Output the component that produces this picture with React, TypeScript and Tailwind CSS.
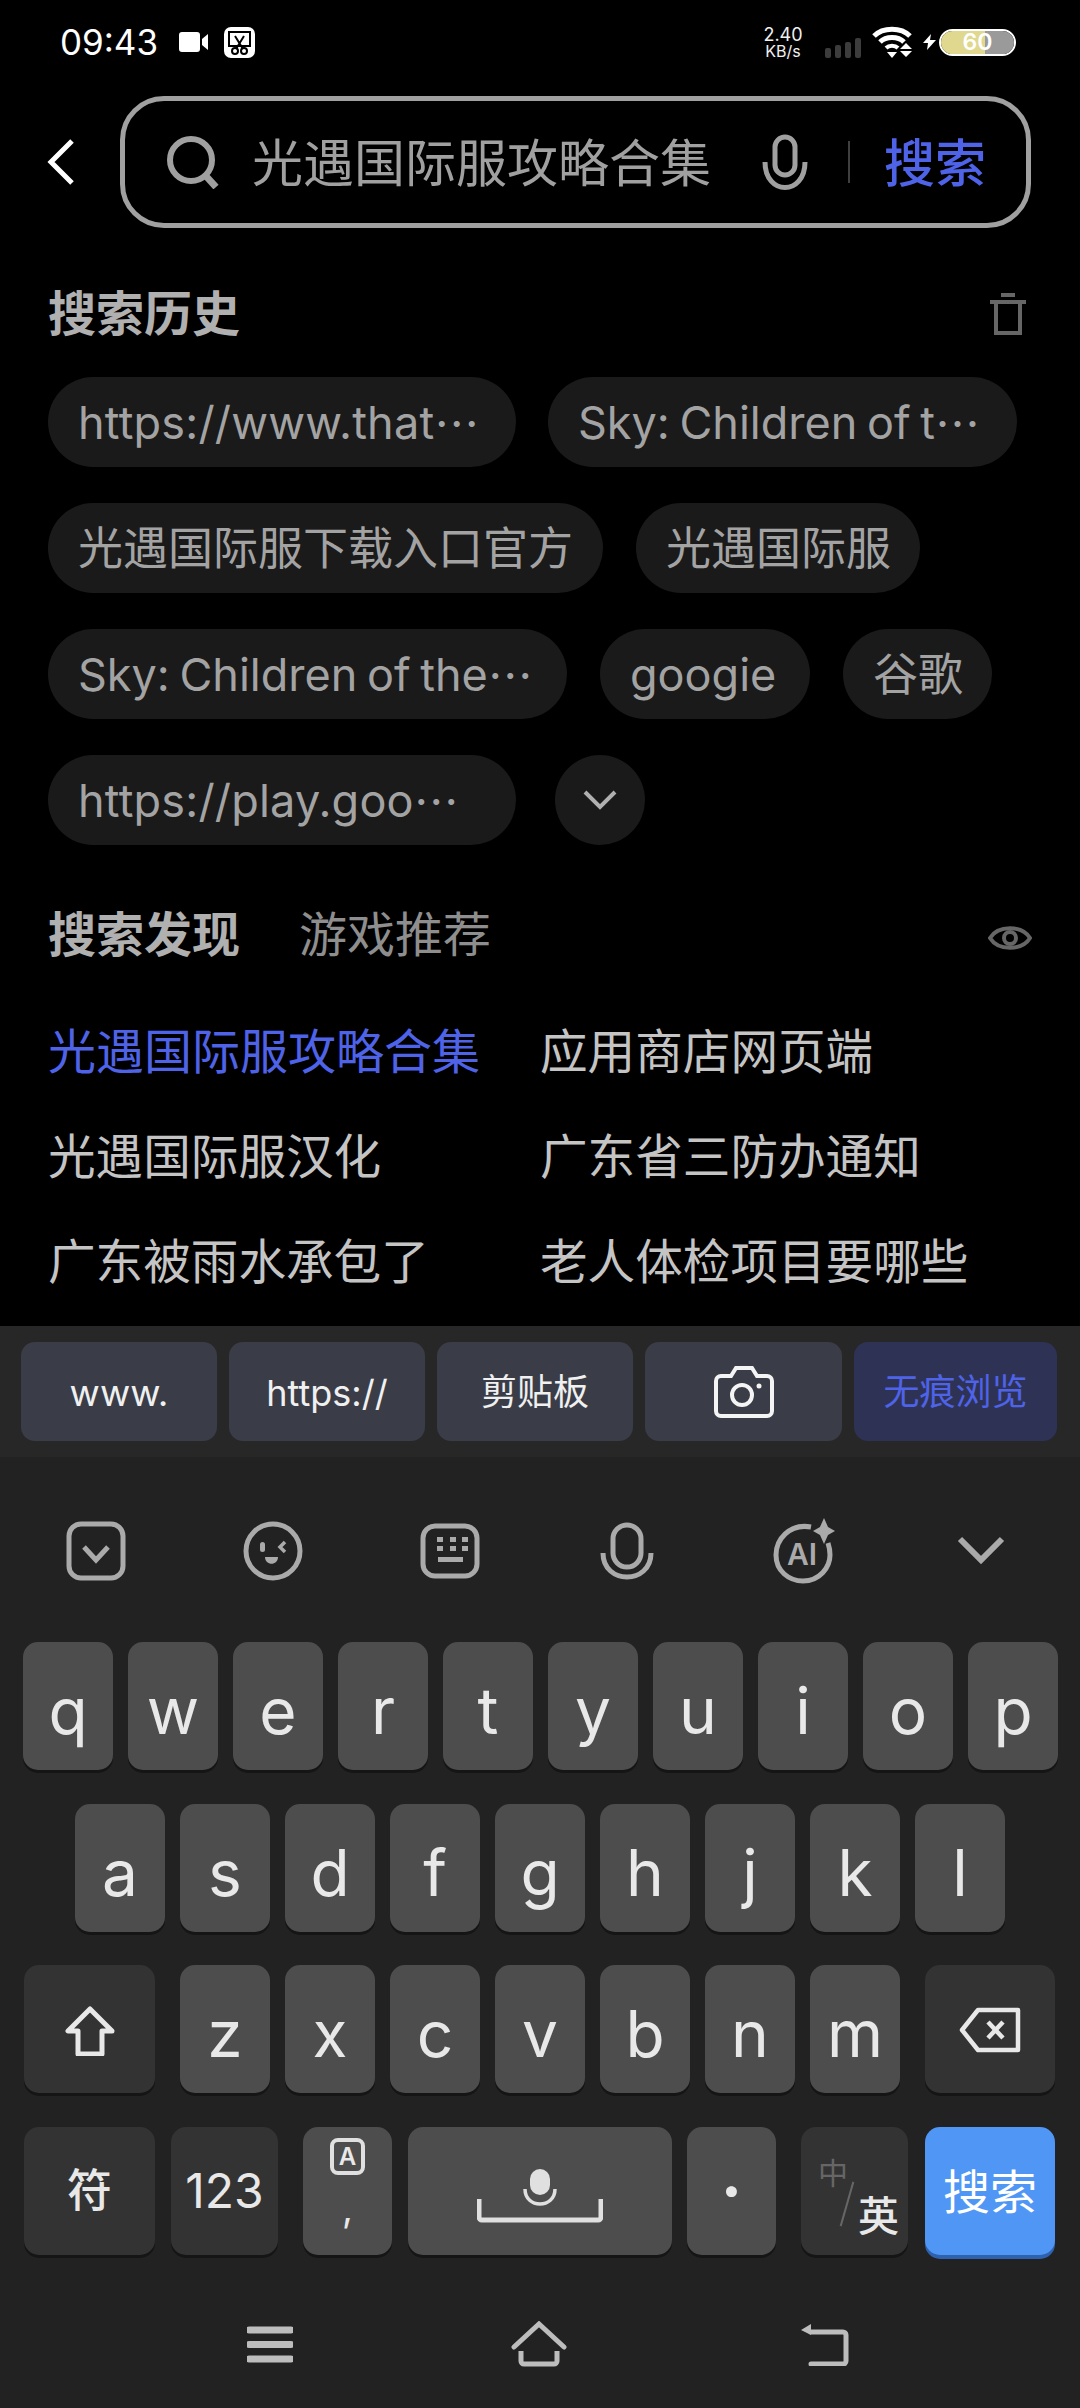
import React from "react";

function Chip({ w, text, more, url }: { w: string; text: string; more?: boolean; url?: boolean }) {
  return (
    <div className={`${w} h-[90px] shrink-0 rounded-[45px] bg-[#1a1a1a] pl-[30px] pt-[2px] flex items-center text-[45px] ${url ? "tracking-[0.2px]" : "tracking-normal"} [word-spacing:-3px] text-[#a3a3a3] whitespace-nowrap overflow-hidden`}>
      {text}
      {more && <span className="font-['Noto_Sans_CJK_SC',sans-serif]">⋯</span>}
    </div>
  );
}

function Tool({ w, blue, children }: { w: string; blue?: boolean; children: React.ReactNode }) {
  return (
    <div className={`${w} h-[99px] rounded-[14px] flex items-center justify-center text-[36px] ${blue ? "bg-[#2e3356] text-[#4f63e8]" : "bg-[#3a3d47] text-[#f0f0f0]"}`}>
      {children}
    </div>
  );
}

function Key({ label }: { label: string }) {
  return (
    <div className="w-[90px] h-[128px] shrink-0 rounded-[15px] bg-[#4d4d4d] shadow-[0_3px_0_#151515] pt-[9px] flex items-center justify-center text-[64px] text-[#e8e8e8]">
      {label}
    </div>
  );
}

function FnKey({ w, children }: { w: string; children: React.ReactNode }) {
  return (
    <div className={`${w} h-[128px] shrink-0 rounded-[15px] bg-[#333333] shadow-[0_3px_0_#151515] flex items-center justify-center text-[#e8e8e8]`}>
      {children}
    </div>
  );
}

function IconCell({ children }: { children: React.ReactNode }) {
  return <div className="w-[177px] flex items-center justify-center">{children}</div>;
}

export default function App() {
  return (
    <div className="w-[1080px] h-[2408px] bg-black flex flex-col overflow-hidden font-[Inter,'Noto_Sans_CJK_SC',sans-serif]">
      {/* Status bar */}
      <div className="h-[84px] shrink-0 pl-[60px] flex items-center text-white">
        <span className="text-[35px] w-[119px]">09:43</span>
        <svg width="30" height="22" viewBox="0 0 30 22">
          <rect x="0" y="1" width="21" height="20" rx="3" fill="#fff" />
          <path d="M23 8l6-5v16l-6-5z" fill="#fff" />
        </svg>
        <svg className="ml-[15px]" width="31" height="31" viewBox="0 0 31 31">
          <rect x="0" y="0" width="31" height="31" rx="7" fill="#fff" />
          <rect x="5" y="5" width="21" height="14" fill="none" stroke="#000" strokeWidth="2" />
          <circle cx="11" cy="24" r="3" fill="none" stroke="#000" strokeWidth="2" />
          <circle cx="20" cy="24" r="3" fill="none" stroke="#000" strokeWidth="2" />
          <path d="M11 9l8 13M20 9l-8 13" stroke="#000" strokeWidth="2" />
        </svg>
        <div className="ml-[507px] w-[42px] flex flex-col items-center text-[#f0f0f0]">
          <span className="text-[18px] leading-[18px]">2.40</span>
          <span className="text-[16px] leading-[15px]">KB/s</span>
        </div>
        <svg className="ml-[21px] mt-[12px]" width="36" height="20" viewBox="0 0 36 20">
          <rect x="0" y="10" width="6" height="10" rx="2" fill="#3c3c3c" />
          <rect x="10" y="7" width="6" height="13" rx="2" fill="#3c3c3c" />
          <rect x="20" y="4" width="6" height="16" rx="2" fill="#3c3c3c" />
          <rect x="30" y="0" width="6" height="20" rx="2" fill="#3c3c3c" />
        </svg>
        <svg className="ml-[11px]" width="42" height="32" viewBox="0 0 42 32">
          <path d="M2 10C11 1 29 1 38 10" fill="none" stroke="#fff" strokeWidth="5" />
          <path d="M8 16C14 10 26 10 32 16" fill="none" stroke="#fff" strokeWidth="5" />
          <path d="M14 22C17 19 23 19 26 22" fill="none" stroke="#fff" strokeWidth="4" />
          <path d="M15 26h10l-5 6z" fill="#fff" />
          <path d="M34 17l6 6H28zM28 25h12l-6 6z" fill="#fff" />
        </svg>
        <svg className="ml-[9px]" width="13" height="16" viewBox="0 0 13 16">
          <path d="M8 0L0 9h5l-1 7 9-10H7z" fill="#fff" />
        </svg>
        <div className="ml-[3px] w-[77px] h-[27px] rounded-[14px] border-2 border-white overflow-hidden relative flex">
          <div className="w-[44px] bg-[#e0d88e]" />
          <div className="flex-1 bg-[#9a9a9a]" />
          <span className="absolute inset-0 flex items-center justify-center text-[23px] leading-none font-semibold text-white">60</span>
        </div>
      </div>

      {/* Search bar */}
      <div className="mt-[12px] h-[132px] shrink-0 flex items-center pl-[47px]">
        <svg width="28" height="46" viewBox="0 0 28 46">
          <path d="M25 2L4 23l21 21" fill="none" stroke="#fff" strokeWidth="5" />
        </svg>
        <div className="ml-[45px] w-[911px] h-[132px] rounded-[44px] border-[5px] border-[#a0a0a0] flex items-center pl-[42px]">
          <svg width="54" height="54" viewBox="0 0 54 54">
            <circle cx="24" cy="25" r="21" fill="none" stroke="#a0a0a0" strokeWidth="6" />
            <path d="M38 40l11 12" stroke="#a0a0a0" strokeWidth="7" />
          </svg>
          <span className="ml-[31px] pt-[5px] w-[510px] text-[51px] text-[#a0a0a0] whitespace-nowrap">光遇国际服攻略合集</span>
          <svg width="46" height="56" viewBox="0 0 46 56">
            <rect x="13" y="3" width="20" height="38" rx="10" fill="none" stroke="#a0a0a0" strokeWidth="5" />
            <path d="M3 28c0 34 40 34 40 0" fill="none" stroke="#a0a0a0" strokeWidth="5" />
          </svg>
          <div className="ml-[40px] w-[2px] h-[42px] bg-[#3f3f3f]" />
          <span className="ml-[34px] pt-[5px] text-[51px] font-medium text-[#4f63e8]">搜索</span>
        </div>
      </div>

      {/* Search history */}
      <div className="mt-[56px] h-[60px] shrink-0 pl-[48px] pr-[54px] flex items-center justify-between">
        <span className="text-[48px] font-bold text-[#b0b0b0]">搜索历史</span>
        <svg width="36" height="42" viewBox="0 0 36 42">
          <path d="M0 9h36M11 2h14" stroke="#666" strokeWidth="4" />
          <path d="M6 10v30h24V10" fill="none" stroke="#666" strokeWidth="4" />
        </svg>
      </div>
      <div className="mt-[33px] pl-[48px] flex flex-col gap-[36px]">
        <div className="flex gap-[32px]">
          <Chip w="w-[468px]" text="https://www.that" more url />
          <Chip w="w-[469px]" text="Sky: Children of t" more />
        </div>
        <div className="flex gap-[33px]">
          <Chip w="w-[555px]" text="光遇国际服下载入口官方" />
          <Chip w="w-[284px]" text="光遇国际服" />
        </div>
        <div className="flex gap-[33px]">
          <Chip w="w-[519px]" text="Sky: Children of the" more />
          <Chip w="w-[210px]" text="googie" />
          <Chip w="w-[149px]" text="谷歌" />
        </div>
        <div className="flex gap-[39px]">
          <Chip w="w-[468px]" text="https://play.goo" more url />
          <div className="w-[90px] h-[90px] rounded-full bg-[#1a1a1a] flex items-center justify-center">
            <svg width="34" height="22" viewBox="0 0 34 22">
              <path d="M2 3l15 15L32 3" fill="none" stroke="#b0b0b0" strokeWidth="4" />
            </svg>
          </div>
        </div>
      </div>

      {/* Search discover */}
      <div className="mt-[60px] h-[60px] shrink-0 pl-[48px] pr-[48px] flex items-center">
        <span className="text-[48px] font-bold text-[#b0b0b0]">搜索发现</span>
        <span className="ml-[59px] text-[48px] text-[#8e8e8e]">游戏推荐</span>
        <svg className="ml-auto mt-[5px]" width="44" height="34" viewBox="0 0 44 34">
          <path d="M2 17C10 4 34 4 42 17 34 30 10 30 2 17z" fill="none" stroke="#666" strokeWidth="4" />
          <circle cx="22" cy="17" r="6" fill="none" stroke="#666" strokeWidth="4" />
        </svg>
      </div>
      <div className="mt-[34px] pl-[48px] grid grid-cols-[492px_1fr] auto-rows-[105px] items-center text-[47.6px] text-[#c4c4c4]">
        <span className="text-[48px] text-[#4f63e8]">光遇国际服攻略合集</span>
        <span>应用商店网页端</span>
        <span>光遇国际服汉化</span>
        <span>广东省三防办通知</span>
        <span>广东被雨水承包了</span>
        <span>老人体检项目要哪些</span>
      </div>

      {/* Keyboard */}
      <div className="mt-auto h-[1082px] shrink-0 bg-[#222222] flex flex-col">
        <div className="h-[131px] shrink-0 bg-[#272727] pt-[16px] pl-[21px] flex gap-[12px]">
          <Tool w="w-[196px]"><span className="pt-[3px] text-[37px]">www.</span></Tool>
          <Tool w="w-[196px]"><span className="pt-[2px]">https://</span></Tool>
          <Tool w="w-[196px]">剪贴板</Tool>
          <Tool w="w-[197px]">
            <svg width="62" height="52" viewBox="0 0 62 52">
              <path d="M3 15a5 5 0 0 1 5-5h10l5-8h16l5 8h10a5 5 0 0 1 5 5v30a5 5 0 0 1-5 5H8a5 5 0 0 1-5-5z" fill="none" stroke="#f4f4f4" strokeWidth="4" />
              <circle cx="29" cy="29" r="10" fill="none" stroke="#f4f4f4" strokeWidth="4" />
              <circle cx="46" cy="20" r="2.5" fill="#f4f4f4" />
            </svg>
          </Tool>
          <Tool w="w-[203px]" blue>无痕浏览</Tool>
        </div>

        {/* Toolbar icons */}
        <div className="h-[185px] shrink-0 pl-[7px] pt-[2px] flex items-center">
          <IconCell>
            <svg width="60" height="60" viewBox="0 0 60 60">
              <rect x="3" y="3" width="54" height="54" rx="12" fill="none" stroke="#aaaaaa" strokeWidth="5" />
              <path d="M18 26l12 13 12-13" fill="none" stroke="#aaaaaa" strokeWidth="5" />
            </svg>
          </IconCell>
          <IconCell>
            <svg width="60" height="60" viewBox="0 0 60 60">
              <circle cx="30" cy="30" r="27" fill="none" stroke="#aaaaaa" strokeWidth="5" />
              <rect x="17" y="21" width="5" height="10" rx="2.5" fill="#aaaaaa" />
              <path d="M42 21l-5 5 5 5" fill="none" stroke="#aaaaaa" strokeWidth="3.5" />
              <path d="M22 36h13c0 9-13 9-13 0z" fill="#aaaaaa" />
            </svg>
          </IconCell>
          <IconCell>
            <svg width="60" height="56" viewBox="0 0 60 56">
              <rect x="3" y="3" width="54" height="50" rx="12" fill="none" stroke="#aaaaaa" strokeWidth="5" />
              <path d="M17 14h6v5h-6zM30 14h6v5h-6zM42 14h6v5h-6zM17 23h6v5h-6zM30 23h6v5h-6zM42 23h6v5h-6zM18 34h25v5H18z" fill="#aaaaaa" />
            </svg>
          </IconCell>
          <IconCell>
            <svg width="54" height="58" viewBox="0 0 54 58">
              <rect x="13" y="3" width="28" height="42" rx="14" fill="none" stroke="#aaaaaa" strokeWidth="5" />
              <path d="M3 31c0 32 48 32 48 0" fill="none" stroke="#aaaaaa" strokeWidth="5" />
            </svg>
          </IconCell>
          <IconCell>
            <svg width="62" height="66" viewBox="0 0 62 66">
              <path d="M38 9C16 5 3 22 3 37c0 16 13 26 27 26 17 0 27-14 27-26 0-6-1-9-2-12" fill="none" stroke="#aaaaaa" strokeWidth="5" />
              <path d="M51 0l4 9 7 4-7 4-4 9-4-9-7-4 7-4z" fill="#aaaaaa" />
              <text x="29" y="47" textAnchor="middle" fontSize="30" fontWeight="600" fill="#aaaaaa">AI</text>
            </svg>
          </IconCell>
          <IconCell>
            <svg width="48" height="30" viewBox="0 0 48 30">
              <path d="M3 3l21 21L45 3" fill="none" stroke="#aaaaaa" strokeWidth="6" />
            </svg>
          </IconCell>
        </div>

        {/* Keys */}
        <div className="pl-[23px] flex gap-[15px]">
          {["q", "w", "e", "r", "t", "y", "u", "i", "o", "p"].map((k) => (
            <Key key={k} label={k} />
          ))}
        </div>
        <div className="mt-[34px] pl-[75px] flex gap-[15px]">
          {["a", "s", "d", "f", "g", "h", "j", "k", "l"].map((k) => (
            <Key key={k} label={k} />
          ))}
        </div>
        <div className="mt-[33px] pl-[24px] flex gap-[15px]">
          <FnKey w="w-[131px]">
            <svg className="mt-[4px]" width="50" height="50" viewBox="0 0 50 50">
              <path d="M25 3L3 25h10v23h24V25h10z" fill="none" stroke="#e8e8e8" strokeWidth="5" strokeLinejoin="round" />
            </svg>
          </FnKey>
          <div className="ml-[10px] flex gap-[15px]">
            {["z", "x", "c", "v", "b", "n", "m"].map((k) => (
              <Key key={k} label={k} />
            ))}
          </div>
          <div className="ml-[10px]">
            <FnKey w="w-[130px]">
              <svg className="mt-[2px]" width="62" height="46" viewBox="0 0 62 46">
                <path d="M19 3h40v40H19L3 23z" fill="none" stroke="#e8e8e8" strokeWidth="4.500" strokeLinejoin="round" />
                <path d="M29 15l15 16M44 15L29 31" stroke="#e8e8e8" strokeWidth="4.500" />
              </svg>
            </FnKey>
          </div>
        </div>
        <div className="mt-[34px] pl-[24px] flex">
          <FnKey w="w-[131px]">
            <span className="text-[45px] font-medium">符</span>
          </FnKey>
          <div className="ml-[16px]">
            <FnKey w="w-[107px]">
              <span className="text-[48px]">123</span>
            </FnKey>
          </div>
          <div className="ml-[25px] w-[89px] h-[128px] rounded-[15px] bg-[#4d4d4d] shadow-[0_3px_0_#151515] pt-[11px] flex flex-col items-center text-[#e8e8e8]">
            <span className="w-[35px] h-[37px] rounded-[8px] border-4 border-[#e0e0e0] flex items-center justify-center text-[24px] font-semibold">A</span>
            <span className="text-[38px] leading-[46px] mt-[10px]">,</span>
          </div>
          <div className="ml-[16px] w-[264px] h-[128px] rounded-[15px] bg-[#4d4d4d] shadow-[0_3px_0_#151515] flex items-center justify-center">
            <svg className="mt-[10px]" width="126" height="54" viewBox="0 0 126 54">
              <rect x="53" y="0" width="20" height="26" rx="10" fill="#e0e0e0" />
              <path d="M48 20c0 20 30 20 30 0" fill="none" stroke="#e0e0e0" strokeWidth="3.500" />
              <path d="M2 30v18a3 3 0 0 0 3 3h116a3 3 0 0 0 3-3V30" fill="none" stroke="#e0e0e0" strokeWidth="5" />
            </svg>
          </div>
          <div className="ml-[15px]">
            <div className="w-[89px] h-[128px] rounded-[15px] bg-[#4d4d4d] shadow-[0_3px_0_#151515] flex items-center justify-center text-[64px] font-bold text-[#e8e8e8]">·</div>
          </div>
          <div className="ml-[25px]">
            <div className="w-[107px] h-[128px] rounded-[15px] bg-[#333333] shadow-[0_3px_0_#151515] pl-[17px] pt-[28px] flex text-[#e8e8e8]">
              <span className="text-[30px] leading-[36px] text-[#666666]">中</span>
              <div className="mt-[26px] -ml-[2px] w-[2px] h-[46px] bg-[#666666] rotate-[16deg]" />
              <span className="mt-[38px] ml-[10px] text-[41px] leading-[46px] font-medium">英</span>
            </div>
          </div>
          <div className="ml-[17px] w-[130px] h-[128px] rounded-[15px] bg-[#5096f5] shadow-[0_4px_0_#2f62ae] pt-[2px] flex items-center justify-center text-[47px] text-white">
            搜索
          </div>
        </div>

        {/* Nav bar */}
        <div className="flex-1 pt-[25px] flex items-center">
          <svg className="ml-[247px]" width="46" height="37" viewBox="0 0 46 37">
            <path d="M2 4h42M2 18.500h42M2 33h42" stroke="#bdbdbd" strokeWidth="7" strokeLinecap="round" />
          </svg>
          <svg className="ml-[218px]" width="56" height="46" viewBox="0 0 56 46">
            <path d="M3 26L28 3l25 23" fill="none" stroke="#bdbdbd" strokeWidth="5" strokeLinecap="round" />
            <path d="M10 30v10a3 3 0 0 0 3 3h30a3 3 0 0 0 3-3V30" fill="none" stroke="#bdbdbd" strokeWidth="5" />
          </svg>
          <svg className="ml-[232px]" width="50" height="44" viewBox="0 0 50 44">
            <path d="M12 10h32a3 3 0 0 1 3 3v26a3 3 0 0 1-3 3H12" fill="none" stroke="#bdbdbd" strokeWidth="5" strokeLinecap="round" />
            <path d="M12 2L2 8l10 5z" fill="#bdbdbd" />
          </svg>
        </div>
      </div>
    </div>
  );
}
